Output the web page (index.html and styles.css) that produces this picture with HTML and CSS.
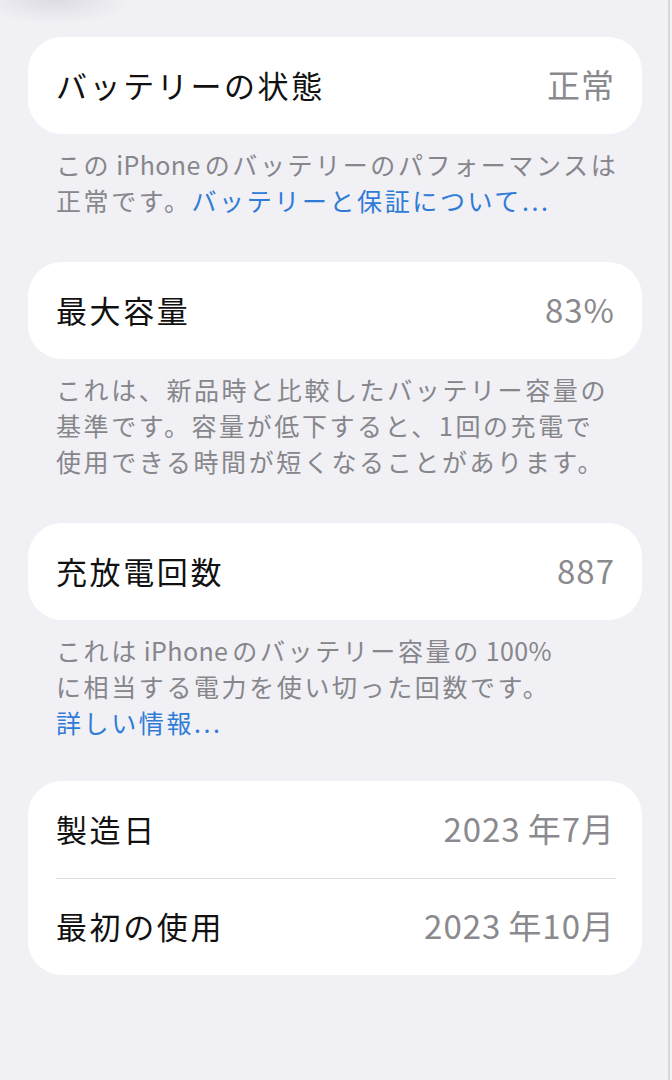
FILE: index.html
```html
<!DOCTYPE html>
<html lang="ja">
<head>
    <meta charset="UTF-8">
    <meta name="viewport" content="width=device-width, initial-scale=1.0">
    <title>バッテリーの状態</title>
    <link rel="stylesheet" href="styles.css">
</head>
<body>

<div class="screen">
    <section class="group">
        <div class="card">
            <div class="row">
                <span class="label">バッテリーの状態</span>
                <span class="value">正常</span>
            </div>
        </div>
        <p class="note">この<span class="latin">iPhone</span>のバッテリーのパフォーマンスは<br>正常です。<a href="#" class="link">バッテリーと保証について...</a></p>
    </section>

    <section class="group">
        <div class="card">
            <div class="row">
                <span class="label">最大容量</span>
                <span class="value">83%</span>
            </div>
        </div>
        <p class="note">これは、新品時と比較したバッテリー容量の<br>基準です。容量が低下すると、1回の充電で<br>使用できる時間が短くなることがあります。</p>
    </section>

    <section class="group group-short">
        <div class="card">
            <div class="row">
                <span class="label">充放電回数</span>
                <span class="value">887</span>
            </div>
        </div>
        <p class="note">これは<span class="latin">iPhone</span>のバッテリー容量の<span class="latin">100%</span><br>に相当する電力を使い切った回数です。<br><a href="#" class="link">詳しい情報...</a></p>
    </section>

    <section class="group">
        <div class="card">
            <div class="row">
                <span class="label">製造日</span>
                <span class="value"><span class="year">2023</span>年7月</span>
            </div>
            <div class="row">
                <span class="label">最初の使用</span>
                <span class="value"><span class="year">2023</span>年10月</span>
            </div>
        </div>
    </section>
</div>

</body>
</html>
```

FILE: styles.css
```css
body {
    margin: 0;
    font-family: "Noto Sans CJK JP", "Noto Sans", sans-serif;
    background-color: #f0f0f5;
    background-image: radial-gradient(ellipse 75px 24px at 55px 0, rgba(200, 200, 206, 0.5), rgba(240, 240, 245, 0));
    background-repeat: no-repeat;
}
.screen {
    min-height: 1080px;
    box-sizing: border-box;
    width: 670px;
    padding: 37px 26px 0 28px;
    border-right: 2px solid #d8d8dc;
}
.group {
    margin-bottom: 44px;
}
.group-short {
    margin-bottom: 41px;
}
.card {
    background-color: #fff;
    border-radius: 34px;
}
.row {
    height: 97px;
    display: flex;
    align-items: center;
    justify-content: space-between;
    padding: 0 28px 3px;
    box-sizing: border-box;
    position: relative;
}
.row + .row::before {
    content: "";
    position: absolute;
    top: 0;
    left: 28px;
    right: 26px;
    height: 1px;
    background-color: #e0e0e4;
}
.label {
    font-size: 31px;
    letter-spacing: 2.6px;
    color: #111;
}
.value {
    font-size: 33px;
    letter-spacing: 1px;
    margin-right: -1px;
    color: #8a8a8e;
}
.year {
    margin-right: 7px;
}
.note {
    margin: 12px 0 0;
    padding: 0 28px;
    font-size: 25px;
    letter-spacing: 2.6px;
    line-height: 36px;
    color: #86868b;
    white-space: nowrap;
}
.latin {
    letter-spacing: 0.4px;
    margin: 0 4px 0 5px;
}
.link {
    color: #2f7bd5;
    text-decoration: none;
}
```
